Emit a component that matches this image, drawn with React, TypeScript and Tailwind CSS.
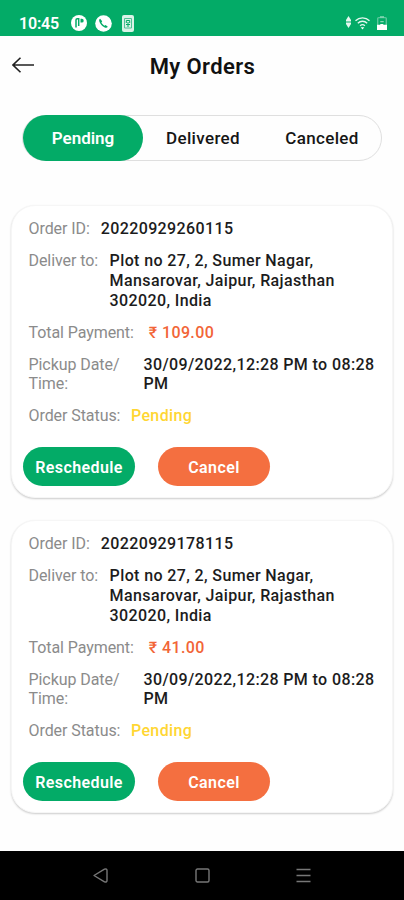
import type { ReactNode } from 'react';

type Order = { id: string; address: string[]; total: string; pickup: string[]; status: string };

const TABS = ['Pending', 'Delivered', 'Canceled'];

const ADDRESS = ['Plot no 27, 2, Sumer Nagar,', 'Mansarovar, Jaipur, Rajasthan', '302020, India'];
const PICKUP = ['30/09/2022,12:28 PM to 08:28', 'PM'];

const ORDERS: Order[] = [
  { id: '20220929260115', address: ADDRESS, total: '₹ 109.00', pickup: PICKUP, status: 'Pending' },
  { id: '20220929178115', address: ADDRESS, total: '₹ 41.00', pickup: PICKUP, status: 'Pending' },
];

function StatusBar() {
  return (
    <header className="flex h-9 items-end bg-[#03ab67] pr-[17px] pb-[4px] pl-[19px] text-white">
      <span className="-mb-px w-[52px] text-[16px] leading-[18px] font-semibold tracking-[-0.2px] whitespace-nowrap">10:45</span>
      <svg className="mb-px h-4 w-4" viewBox="0 0 16 16">
        <circle cx="8" cy="8" r="8" fill="#fff" />
        <path d="M5 12.500V5Q5 3.800 6.200 3.800H7.700V11" fill="none" stroke="#03ab67" strokeWidth="1.500" />
        <path d="M9.500 3.800h1.300a1.900 1.900 0 0 1 0 3.800H9.500z" fill="#03ab67" />
      </svg>
      <svg className="ml-2 h-[17px] w-[17px]" viewBox="0 0 17 17">
        <circle cx="8.500" cy="8.500" r="8.300" fill="#fff" />
        <path
          d="M5.100 3.800c-1 .6-1.200 1.700-.6 3.100.9 2.200 2.600 4.200 4.800 5.300 1.500.8 2.800.7 3.500-.4l-2.200-1.900-1.200.8C8.200 10 7.100 8.800 6.400 7.500l.8-1.200z"
          fill="#03ab67"
        />
      </svg>
      <svg className="ml-[10px] h-[17px] w-[12px]" viewBox="0 0 12 17">
        <rect width="12" height="17" rx="2" fill="#d9f3e7" />
        <path d="M2.500 3.500h7v9.500h-7z" fill="none" stroke="#4fc296" strokeWidth="1" />
        <path d="M6 7v5M4.300 8V5.500h3.400V8M4 9.500h4" fill="none" stroke="#03ab67" strokeWidth="1" />
      </svg>
      <svg className="mb-[4px] ml-auto h-3 w-[5px]" viewBox="0 0 5 12">
        <path d="M2.500 0L5 4v1.500H0V4zM2.500 12L5 8V6.500H0V8z" fill="#e5f7ef" />
      </svg>
      <svg className="mb-[2px] ml-1 h-[14px] w-[15px]" viewBox="0 0 15 13">
        <g fill="none" stroke="#e5f7ef" strokeWidth="1.300">
          <path d="M.5 4.200C4.500.3 10.500.3 14.500 4.200" />
          <path d="M2.800 6.700c2.700-2.600 6.700-2.600 9.400 0" />
          <path d="M5.100 9.200c1.400-1.300 3.400-1.300 4.800 0" />
        </g>
        <path d="M7.500 13L5.700 10.700h3.600z" fill="#fff" />
      </svg>
      <svg className="mb-[2px] ml-[7px] h-[14px] w-[10px]" viewBox="0 0 10 14">
        <path d="M.7 9V2.600Q.7 1.600 1.700 1.600H8.300Q9.300 1.600 9.300 2.600V9" fill="none" stroke="#5cc79c" strokeWidth="1.400" />
        <path d="M3 .3h4v1.500H3zM3.300 5h3.400v1.300H3.300z" fill="#8ad8b6" />
        <path d="M0 8.800h3.300V8h3v.8H10V14H0z" fill="#fff" />
      </svg>
    </header>
  );
}

function Row({ label, gap, children }: { label: ReactNode; gap: string; children: ReactNode }) {
  return (
    <div className={`flex ${gap}`}>
      <dt className="shrink-0 tracking-[-0.07px] text-[#8b8b8b]">{label}</dt>
      <dd className="font-medium tracking-[0.38px] text-[#1c1c1c]">{children}</dd>
    </div>
  );
}

function Lines({ items }: { items: string[] }) {
  return items.map(line => (
    <span key={line} className="block whitespace-nowrap">
      {line}
    </span>
  ));
}

function OrderCard({ order }: { order: Order }) {
  return (
    <article className="h-[293px] rounded-[24px] border border-[#f6f6f6] bg-white px-[11px] pt-[13px] shadow-[0_1px_2px_rgba(0,0,0,0.2)]">
      <dl className="flex flex-col gap-3 pl-[5.5px] text-[16px] leading-[19.9px] whitespace-nowrap">
        <Row label="Order ID:" gap="gap-[11px]">{order.id}</Row>
        <Row label="Deliver to:" gap="gap-[11.500px]"><Lines items={order.address} /></Row>
        <Row label="Total Payment:" gap="gap-[15px]">
          <span className="text-[#f26537]">{order.total}</span>
        </Row>
        <Row label={<Lines items={['Pickup Date/', 'Time:']} />} gap="gap-[24px]">
          <Lines items={order.pickup} />
        </Row>
        <Row label="Order Status:" gap="gap-[10.500px]">
          <span className="text-[#ffd633]">{order.status}</span>
        </Row>
      </dl>
      <div className="mt-[21px] flex gap-[23px] text-[16px] font-semibold tracking-[0.4px] text-white">
        <button className="h-[39px] w-28 rounded-full bg-[#03ab67] pt-0.5">Reschedule</button>
        <button className="h-[39px] w-28 rounded-full bg-[#f46f40] pt-0.5">Cancel</button>
      </div>
    </article>
  );
}

function NavBar() {
  return (
    <nav className="flex h-[49px] items-center justify-between bg-black px-[93px]">
      <svg className="h-[15px] w-[15px]" viewBox="0 0 15 15" fill="none" stroke="#777" strokeWidth="1.400">
        <path d="M1 7.500L11.500 1.200Q14 .3 14 2.500v10q0 2.200-2.500 1.300z" strokeLinejoin="round" />
      </svg>
      <svg className="h-[15px] w-[15px]" viewBox="0 0 15 15" fill="none" stroke="#777" strokeWidth="1.400">
        <rect x="1" y="1" width="13" height="13" rx="1.500" />
      </svg>
      <svg className="h-[15px] w-[15px]" viewBox="0 0 15 15" stroke="#777" strokeWidth="1.700">
        <path d="M.5 1.500h14M.5 7.500h14M.5 13.500h14" />
      </svg>
    </nav>
  );
}

export default function App() {
  return (
    <div className="flex h-[900px] w-[404px] flex-col overflow-hidden bg-[#fefefe] font-[Roboto,'Noto_Sans',sans-serif]">
      <StatusBar />
      <div className="grid h-[60px] grid-cols-[1fr_auto_1fr] items-center px-3">
        <svg className="-mt-[2px] h-4 w-[22px]" viewBox="0 0 22 16" fill="none" stroke="#222" strokeWidth="1.600">
          <path d="M22 8H1M8.500.700L1 8l7.500 7.300" />
        </svg>
        <h1 className="ml-px text-[22px] font-semibold tracking-[0.4px] text-[#111]">My Orders</h1>
      </div>
      <div className="mx-[22px] mt-[19px] flex h-[46px] rounded-full border border-[#dfdfdf] text-[17px] font-medium tracking-[0.35px] text-[#161616]">
        {TABS.map((tab, i) => (
          <button
            key={tab}
            className={
              i === 0
                ? '-my-px w-[120px] rounded-full bg-[#03ab67] pt-0.5 font-semibold tracking-normal text-white'
                : 'flex-1 pt-0.5 pl-px'
            }
          >
            {tab}
          </button>
        ))}
      </div>
      <main className="mx-[11px] mt-11 flex flex-1 flex-col gap-[22px]">
        {ORDERS.map(order => (
          <OrderCard key={order.id} order={order} />
        ))}
      </main>
      <NavBar />
    </div>
  );
}
